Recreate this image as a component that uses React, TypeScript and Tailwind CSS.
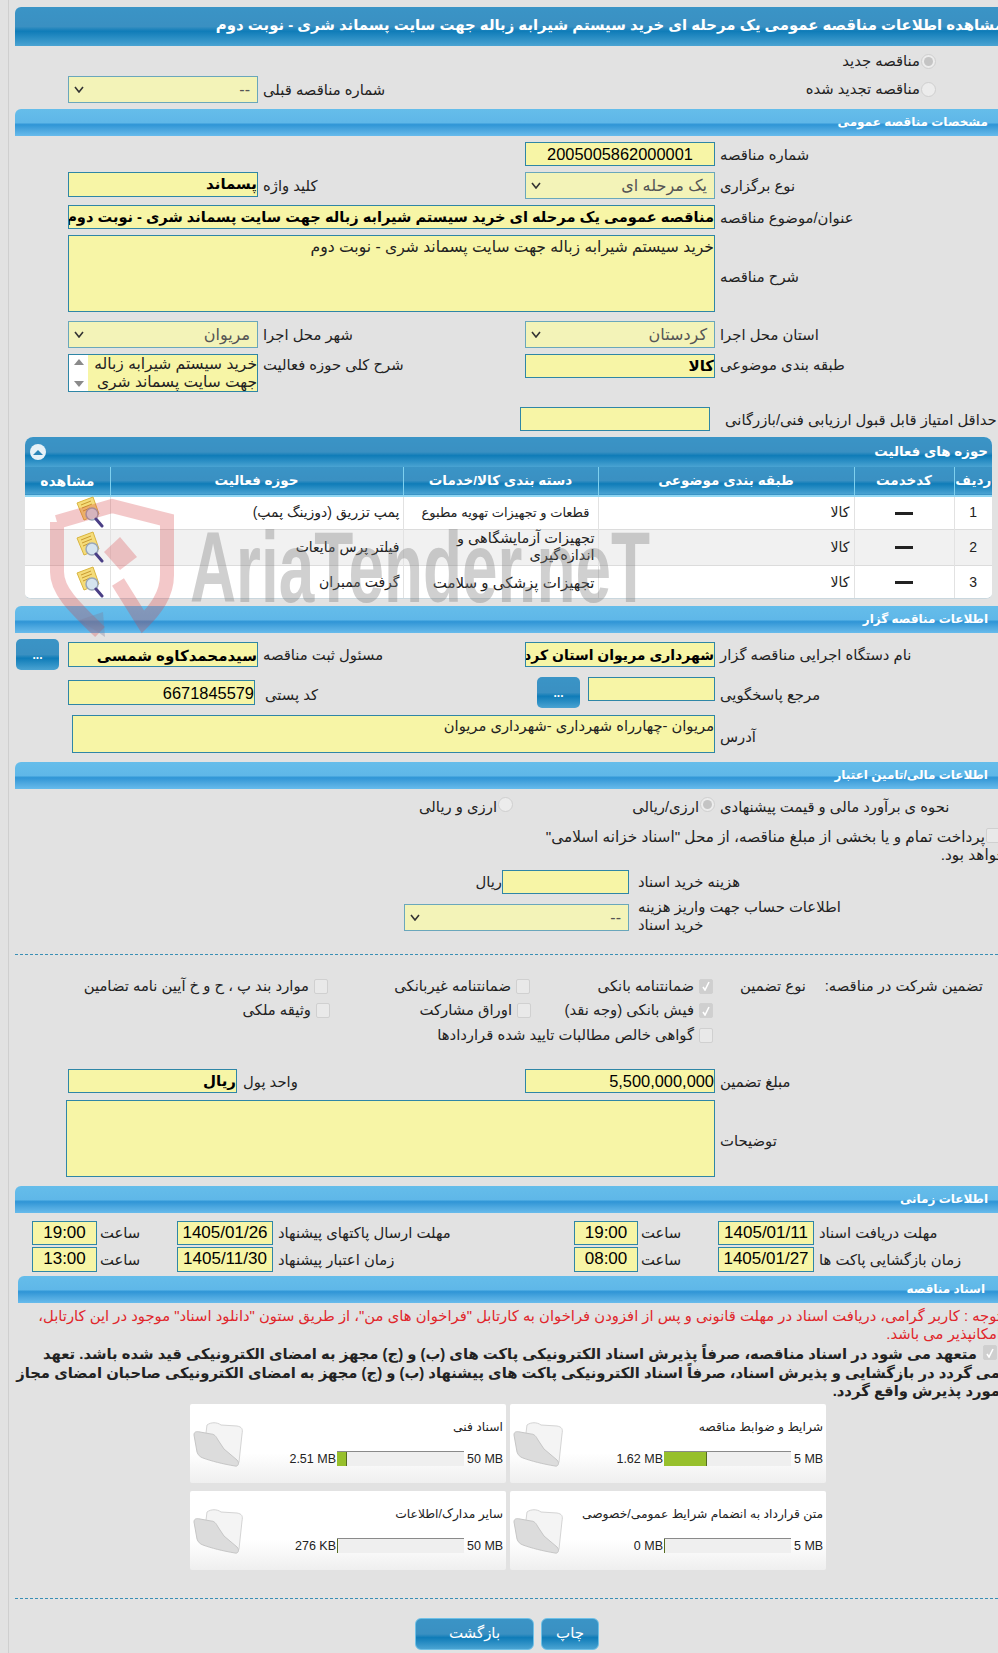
import type { ReactNode } from 'react'

const fieldBase = 'border border-[#2f86a6] bg-[#f7f5a6] overflow-hidden whitespace-nowrap'
const formGrid = 'grid grid-cols-[68px_190px_267px_190px_283px] items-start'
const blueGradient = 'bg-[linear-gradient(#3a94c6_0%,#3a90c2_50%,#0f7cb8_62%,#4aa3d2_100%)]'

function Field({ children, className = '' }: { children?: ReactNode; className?: string }) {
  return <div dir="rtl" className={`${fieldBase} text-right text-[15px] leading-[22px] font-bold text-black ${className}`}>{children}</div>
}

function Digits({ children, center = false, className = '' }: { children?: ReactNode; center?: boolean; className?: string }) {
  return <div className={`${fieldBase} ${center ? 'text-center' : 'text-right'} text-[16.4px] leading-[22px] text-black ${className}`}>{children}</div>
}

function Select({ value, className = '' }: { value: string; className?: string }) {
  return (
    <div dir="ltr" className={`flex items-center justify-between border border-[#6aa7bb] bg-[#f3f3b8] pl-[5px] pr-[7px] ${className}`}>
      <svg width="10" height="7" viewBox="0 0 10 7"><path d="M1 1l4 5 4-5" fill="none" stroke="#333" strokeWidth="1.6" /></svg>
      <span dir="rtl" className="text-[16px] text-[#555]">{value}</span>
    </div>
  )
}

function Label({ children, className = '' }: { children: ReactNode; className?: string }) {
  return <div dir="rtl" className={`pl-[5px] pt-[1px] text-left text-[14.8px] text-[#222] whitespace-nowrap ${className}`}>{children}</div>
}

function SectionBar({ title, className = '' }: { title: string; className?: string }) {
  return (
    <div
      dir="rtl"
      className={`h-[27px] rounded-tl-[6px] bg-[linear-gradient(#65bdea_0%,#5fb7e8_50%,#2f95d6_58%,#4fa9e0_80%,#67bbec_100%)] pr-[10px] text-[12px] leading-[27px] font-bold text-white ${className}`}
    >
      {title}
    </div>
  )
}

function Radio({ on = false }: { on?: boolean }) {
  return (
    <span className="flex h-[15px] w-[15px] shrink-0 items-center justify-center rounded-full border border-[#cfcfcf] bg-[#ececec]">
      {on && <span className="h-[9px] w-[9px] rounded-full bg-[#c4c4c4]" />}
    </span>
  )
}

function Check({ on = false }: { on?: boolean }) {
  return (
    <span className={`flex h-[15px] w-[14px] shrink-0 items-center justify-center rounded-[2px] border border-[#d0d0d0] ${on ? 'bg-[#cfcfcf]' : 'bg-[#e9e9e9]'}`}>
      {on && <svg width="10" height="10" viewBox="0 0 10 10"><path d="M2 6l2 3 4-8" fill="none" stroke="#fff" strokeWidth="1.6" /></svg>}
    </span>
  )
}

function ViewIcon() {
  return (
    <svg width="30" height="32" viewBox="0 0 30 32">
      <path d="M3 7L19 1l6 17-15 6z" fill="#f5dc7a" stroke="#d9b53f" />
      <path d="M7 9l10-4M8 12l10-4M9 15l7-3" stroke="#c99a30" strokeWidth="1" />
      <circle cx="18" cy="18" r="6" fill="#d5e4ef" stroke="#9aa7b8" strokeWidth="1.5" />
      <path d="M22 23l6 7" stroke="#4a3f86" strokeWidth="3" strokeLinecap="round" />
    </svg>
  )
}

function FolderIcon() {
  return (
    <svg width="52" height="48" viewBox="0 0 52 48" className="shrink-0">
      <path d="M14 4c4-3 10-3 14 0l16 1c5 1 6 3 5 8l-3 28c-1 3-3 4-5 2L12 20z" fill="#f4f4f4" stroke="#d4d4d4" />
      <path d="M1 14c0-3 2-4 6-3l11 2c3 0 5 2 7 6l6 9 13 11c3 3 1 7-2 6-12-2-24-5-32-8-3-1-5-3-6-6z" fill="#dcdcdc" stroke="#c6c6c6" />
    </svg>
  )
}

function DocCard({ title, used, max, fill, maxW }: { title: string; used: string; max: string; fill: string; maxW: string }) {
  return (
    <div className="flex h-[79px] flex-col rounded-[2px] bg-[linear-gradient(#ffffff_0%,#ffffff_62%,#efefef_100%)] px-[3px]">
      <div dir="rtl" className="mt-[13px] h-[20px] text-[12.3px] leading-[20px] whitespace-nowrap text-[#222]">{title}</div>
      <div className="-mt-[16px] flex items-start">
        <FolderIcon />
        <div className="flex flex-1 items-start justify-end pt-[30px] [font-family:'Liberation_Sans',sans-serif] text-[12.5px] leading-[16px] whitespace-nowrap text-[#222]">
          <span className="pr-[1px]">{used}</span>
          <span className="h-[15px] w-[127px] border-t border-[#8a8a8a] bg-[#efefef]">
            <span className={`block h-[14px] border-r border-[#556b1f] bg-[#97c02c] ${fill}`} />
          </span>
          <span className={`pl-[3px] ${maxW}`}>{max}</span>
        </div>
      </div>
    </div>
  )
}

const rows = [
  { n: '1', cat: 'قطعات و تجهیزات تهویه مطبوع', catClass: 'pr-[8px] text-[13px] whitespace-nowrap', act: 'پمپ تزریق (دوزینگ پمپ)', h: 'h-[33px]' },
  { n: '2', cat: 'تجهیزات آزمایشگاهی و اندازه‌گیری', catClass: 'pr-[3px] text-[14.5px]', act: 'فیلتر پرس مایعات', h: 'h-[36px]' },
  { n: '3', cat: 'تجهیزات پزشکی و سلامت', catClass: 'pr-[3px] text-[15px] whitespace-nowrap', act: 'گرفت ممبران', h: 'h-[34px]' },
]

function ActivityTable() {
  const headCell = 'border-l border-[#7fd0ee] text-center text-[13.5px] font-bold text-white'
  return (
    <div className="ml-[25px] mr-[6px] mt-[6px] h-[162px] overflow-hidden rounded-t-[8px] rounded-b-[6px] border-b border-[#c9d7de] bg-white">
      <div dir="rtl" className={`flex h-[30px] items-center justify-between ${blueGradient} pl-[5px] pr-[4px] text-[13.4px] font-bold text-white`}>
        <span>حوزه های فعالیت</span>
        <span className="flex h-[16px] w-[16px] items-center justify-center rounded-full bg-[#e6f1f7]">
          <span className="h-0 w-0 border-x-[5px] border-b-[5px] border-x-transparent border-b-[#2d86b8]" />
        </span>
      </div>
      <table dir="rtl" className="w-full table-fixed border-collapse text-[14px] text-[#222]">
        <colgroup>
          <col className="w-[38px]" />
          <col className="w-[100px]" />
          <col className="w-[256px]" />
          <col className="w-[195px]" />
          <col className="w-[293px]" />
          <col />
        </colgroup>
        <thead>
          <tr className={`h-[29px] ${blueGradient} border-b-2 border-[#8fd6f2]`}>
            <th className={headCell}>ردیف</th>
            <th className={headCell}>کدخدمت</th>
            <th className={headCell}>طبقه بندی موضوعی</th>
            <th className={headCell}>دسته بندی کالا/خدمات</th>
            <th className={headCell}>حوزه فعالیت</th>
            <th className="text-center text-[14px] font-bold text-white">مشاهده</th>
          </tr>
        </thead>
        <tbody>
          {rows.map((r, i) => (
            <tr key={r.n} className={`${r.h} border-b border-[#dcdcdc] ${i === 1 ? 'bg-[#f1f1f1]' : 'bg-white'}`}>
              <td className="border-l border-[#e2e2e2] text-center [font-family:'Liberation_Sans',sans-serif] text-[14px]">{r.n}</td>
              <td className="border-l border-[#e2e2e2] text-center"><span className="inline-block h-[3px] w-[18px] bg-[#222] align-middle" /></td>
              <td className="border-l border-[#e2e2e2] pr-[4px]">کالا</td>
              <td className={`border-l border-[#e2e2e2] leading-[17px] ${r.catClass}`}>{r.cat}</td>
              <td className="border-l border-[#e2e2e2] pr-[3px]">{r.act}</td>
              <td className="p-0"><div className="-mt-[3px] h-[30px] overflow-visible pr-[6px]"><ViewIcon /></div></td>
            </tr>
          ))}
        </tbody>
      </table>
    </div>
  )
}

function Watermark() {
  return (
    <svg className="pointer-events-none absolute left-0 top-[490px]" width="700" height="160" viewBox="0 490 700 160">
      <g fill="none" stroke="#d63c40" strokeWidth="14" opacity="0.28">
        <path d="M57 522L112 506L167 520V575C167 595 155 610 143 622L118 582" />
        <path d="M57 522V572C57 590 72 605 100 632" />
      </g>
      <path d="M120 537L137 557L120 570L104 552z" fill="#d63c40" opacity="0.28" />
      <path d="M80 620L105 637L103 612z" fill="#7f7f9a" opacity="0.35" />
      <text x="190" y="602" fontFamily="'Liberation Sans'" fontWeight="700" fontSize="100" textLength="460" lengthAdjust="spacingAndGlyphs" fill="#7a7a7a" opacity="0.35">AriaTender.neT</text>
    </svg>
  )
}

function GuaranteeOption({ label, on }: { label: string; on?: boolean }) {
  return (
    <div className="flex items-center justify-end gap-[5px]">
      <span dir="rtl" className="text-[14.8px] whitespace-nowrap text-[#222]">{label}</span>
      <Check on={on} />
    </div>
  )
}

function TimeCells({ t1, d1, l1, t2, d2, l2 }: { t1: string; d1: string; l1: string; t2: string; d2: string; l2: string }) {
  const small = 'pl-[3px] pt-[1px] text-[14.8px] text-[#222] text-left'
  return (
    <>
      <div />
      <Digits center className="h-full !text-[17px]">{t1}</Digits>
      <div dir="rtl" className={small}>ساعت</div>
      <Digits center className="h-full !text-[17px]">{d1}</Digits>
      <Label className="pl-[2px]">{l1}</Label>
      <Digits center className="h-full !text-[17px]">{t2}</Digits>
      <div dir="rtl" className={small}>ساعت</div>
      <Digits center className="h-full !text-[17px]">{d2}</Digits>
      <Label className="pl-[3px]">{l2}</Label>
    </>
  )
}

export default function App() {
  return (
    <div dir="ltr" className="relative h-[1653px] w-[998px] overflow-hidden bg-[#e2e2e2] [font-family:'Liberation_Sans','DejaVu_Sans',sans-serif]">
      <div className="pointer-events-none absolute inset-y-0 left-[8px] w-px bg-[#cfcfcf]" />

      <div className="pt-[7px]">
        <div dir="rtl" className={`ml-[15px] h-[39px] overflow-hidden rounded-tl-[6px] ${blueGradient} text-[14.9px] leading-[37px] font-bold whitespace-nowrap text-white`}>
          <div className="-mr-[6px]">مشاهده اطلاعات مناقصه عمومی یک مرحله ای خرید سیستم شیرابه زباله جهت سایت پسماند شری - نوبت دوم</div>
        </div>

        <div className={`${formGrid} h-[63px]`}>
          <div />
          <Select value="--" className="mt-[30px] h-[27px]" />
          <Label className="mt-[32px]">شماره مناقصه قبلی</Label>
          <div />
          <div dir="rtl" className="flex flex-col gap-[9px] pr-[62px] pt-[6px] text-[14.8px] leading-[19px] whitespace-nowrap text-[#222]">
            <div className="flex items-center gap-[1px]"><Radio on /><span>مناقصه جدید</span></div>
            <div className="flex items-center gap-[1px]"><Radio /><span>مناقصه تجدید شده</span></div>
          </div>
        </div>

        <SectionBar title="مشخصات مناقصه عمومی" className="ml-[15px]" />

        <div className={`${formGrid} mt-[6px] h-[24px]`}>
          <div />
          <div />
          <div />
          <Digits center className="h-[24px]">2005005862000001</Digits>
          <Label className="leading-[24px]">شماره مناقصه</Label>
        </div>
        <div className={`${formGrid} mt-[6px] h-[27px]`}>
          <div />
          <Field className="h-[25px]">پسماند</Field>
          <Label className="leading-[27px]">کلید واژه</Label>
          <Select value="یک مرحله ای" className="h-[27px]" />
          <Label className="leading-[27px]">نوع برگزاری</Label>
        </div>
        <div className="mt-[6px] grid h-[24px] grid-cols-[68px_647px_283px] items-start">
          <div />
          <Field className="h-[24px] !text-[14.6px]">مناقصه عمومی یک مرحله ای خرید سیستم شیرابه زباله جهت سایت پسماند شری - نوبت دوم</Field>
          <Label className="leading-[24px]">عنوان/موضوع مناقصه</Label>
        </div>
        <div className="mt-[6px] grid h-[77px] grid-cols-[68px_647px_283px] items-center">
          <div />
          <div dir="rtl" className={`${fieldBase} h-[77px] text-right text-[15.6px] leading-[22px] text-[#222]`}>خرید سیستم شیرابه زباله جهت سایت پسماند شری - نوبت دوم</div>
          <Label className="mt-[6px]">شرح مناقصه</Label>
        </div>
        <div className={`${formGrid} mt-[9px] h-[27px]`}>
          <div />
          <Select value="مریوان" className="h-[27px]" />
          <Label className="leading-[27px]">شهر محل اجرا</Label>
          <Select value="کردستان" className="h-[27px]" />
          <Label className="leading-[27px]">استان محل اجرا</Label>
        </div>
        <div className={`${formGrid} mt-[6px] h-[38px]`}>
          <div />
          <div className="flex h-[38px] border border-[#2f86a6] bg-[#f7f5a6]">
            <div className="flex w-[19px] flex-col items-center justify-between bg-white py-[4px]">
              <span className="h-0 w-0 border-x-[5px] border-b-[6px] border-x-transparent border-b-[#8a8a8a]" />
              <span className="h-0 w-0 border-x-[5px] border-t-[6px] border-x-transparent border-t-[#8a8a8a]" />
            </div>
            <div dir="rtl" className="flex-1 overflow-hidden text-[15.5px] leading-[18px] whitespace-nowrap text-[#222]">
              <div>خرید سیستم شیرابه زباله</div>
              <div>جهت سایت پسماند شری</div>
            </div>
          </div>
          <Label className="leading-[20px]">شرح کلی حوزه فعالیت</Label>
          <Field className="h-[24px]">کالا</Field>
          <Label className="leading-[20px]">طبقه بندی موضوعی</Label>
        </div>
        <div className="mt-[15px] grid h-[24px] grid-cols-[520px_190px_10px_1fr] items-start">
          <div />
          <Digits className="h-[24px]" />
          <div />
          <Label className="pl-0 leading-[24px]">حداقل امتیاز قابل قبول ارزیابی فنی/بازرگانی</Label>
        </div>

        <ActivityTable />

        <SectionBar title="اطلاعات مناقصه گزار" className="ml-[15px] mt-[7px]" />

        <div className={`${formGrid} mt-[6px] h-[31px]`}>
          <button className={`ml-[16px] h-[31px] w-[43px] rounded-[5px] ${blueGradient} text-[12px] font-bold text-white`}>...</button>
          <Field className="mt-[3px] h-[25px] leading-[25px]">سیدمحمدکاوه شمسی</Field>
          <Label className="mt-[3px] leading-[25px]">مسئول ثبت مناقصه</Label>
          <Field className="mt-[3px] h-[25px] !text-[14px] leading-[25px]">شهرداری مریوان استان کرد</Field>
          <Label className="mt-[3px] leading-[25px]">نام دستگاه اجرایی مناقصه گزار</Label>
        </div>
        <div className={`${formGrid} mt-[7px] h-[31px]`}>
          <div />
          <Digits className="mt-[3px] h-[25px] w-[187px] leading-[25px]">6671845579</Digits>
          <Label className="mt-[5px] pl-[7px] leading-[25px]">کد پستی</Label>
          <div className="flex items-start gap-[8px] pl-[12px]">
            <button className={`h-[31px] w-[43px] shrink-0 rounded-[5px] ${blueGradient} text-[12px] font-bold text-white`}>...</button>
            <Digits className="h-[24px] flex-1" />
          </div>
          <Label className="mt-[5px] leading-[25px]">مرجع پاسخگویی</Label>
        </div>
        <div className="mt-[7px] grid h-[38px] grid-cols-[72px_643px_283px] items-center">
          <div />
          <div dir="rtl" className={`${fieldBase} h-[38px] text-right text-[14.7px] leading-[20px] text-[#222]`}>مریوان -چهارراه شهرداری -شهرداری مریوان</div>
          <Label className="mt-[6px]">آدرس</Label>
        </div>

        <SectionBar title="اطلاعات مالی/تامین اعتبار" className="ml-[15px] mt-[9px]" />

        <div className="mt-[6px] grid h-[20px] grid-cols-[513px_202px_283px] items-center">
          <div dir="rtl" className="flex items-center gap-[1px] text-[14.8px] whitespace-nowrap text-[#222]"><span className="-mt-[4px]"><Radio /></span><span>ارزی و ریالی</span></div>
          <div dir="rtl" className="flex items-center gap-[1px] text-[14.8px] whitespace-nowrap text-[#222]"><span className="-mt-[4px]"><Radio on /></span><span>ارزی/ریالی</span></div>
          <Label>نحوه ی برآورد مالی و قیمت پیشنهادی</Label>
        </div>
        <div dir="rtl" className="mr-[-8px] mt-[13px] h-[36px] text-[15.3px] leading-[18px] whitespace-nowrap text-[#222]">
          <div className="flex items-start gap-[1px] pr-[6px]"><Check /><span>پرداخت تمام و یا بخشی از مبلغ مناقصه، از محل "اسناد خزانه اسلامی"</span></div>
          <div>خواهد بود.</div>
        </div>
        <div className="mt-[6px] grid h-[24px] grid-cols-[502px_127px_1fr] items-center">
          <div dir="rtl" className="text-right text-[14.8px] text-[#222]">ریال</div>
          <Digits className="h-[24px]" />
          <Label className="pl-[9px]">هزینه خرید اسناد</Label>
        </div>
        <div className="mt-[7px] grid h-[27px] grid-cols-[404px_225px_1fr] items-center">
          <div />
          <Select value="--" className="h-[27px]" />
          <div dir="rtl" className="ml-[9px] -mt-[3px] w-[208px] text-left text-[14.8px] leading-[18px] text-[#222]">اطلاعات حساب جهت واریز هزینه خرید اسناد</div>
        </div>

        <div className="ml-[15px] mt-[26px] border-t border-dashed border-[#3a8fb5]" />

        <div className="mt-[19px] grid h-[24px] grid-cols-[328px_202px_183px_285px] items-center">
          <GuaranteeOption label="موارد بند پ ، ح و خ آیین نامه تضامین" />
          <GuaranteeOption label="ضمانتنامه غیربانکی" />
          <GuaranteeOption label="ضمانتنامه بانکی" on />
          <div dir="rtl" className="flex justify-between pr-[15px] pl-[27px] text-[14.8px] whitespace-nowrap text-[#222]"><span>تضمین شرکت در مناقصه:</span><span>نوع تضمین</span></div>
        </div>
        <div className="grid h-[25px] grid-cols-[330px_201px_182px_285px] items-center">
          <GuaranteeOption label="وثیقه ملکی" />
          <GuaranteeOption label="اوراق مشارکت" />
          <GuaranteeOption label="فیش بانکی (وجه نقد)" on />
          <div />
        </div>
        <div className="grid h-[25px] grid-cols-[713px_285px] items-center">
          <GuaranteeOption label="گواهی خالص مطالبات تایید شده قراردادها" />
          <div />
        </div>

        <div className="mt-[21px] grid h-[24px] grid-cols-[68px_169px_288px_190px_283px] items-start">
          <div />
          <Field className="h-[24px]">ریال</Field>
          <Label className="pl-[6px] leading-[24px]">واحد پول</Label>
          <Digits className="h-[24px]">5,500,000,000</Digits>
          <Label className="leading-[24px]">مبلغ تضمین</Label>
        </div>
        <div className="mt-[7px] grid h-[77px] grid-cols-[66px_649px_283px] items-center">
          <div />
          <Digits className="h-[77px]" />
          <Label className="mt-[4px]">توضیحات</Label>
        </div>

        <SectionBar title="اطلاعات زمانی" className="ml-[15px] mt-[9px]" />

        <div className="mt-[8px] grid h-[24px] grid-cols-[32px_65px_80px_96px_301px_64px_80px_96px_1fr] items-center">
          <TimeCells t1="19:00" d1="1405/01/26" l1="مهلت ارسال پاکتهای پیشنهاد" t2="19:00" d2="1405/01/11" l2="مهلت دریافت اسناد" />
        </div>
        <div className="mt-[2px] grid h-[25px] grid-cols-[32px_65px_80px_96px_301px_64px_80px_96px_1fr] items-center">
          <TimeCells t1="13:00" d1="1405/11/30" l1="زمان اعتبار پیشنهاد" t2="08:00" d2="1405/01/27" l2="زمان بازگشایی پاکت ها" />
        </div>

        <SectionBar title="اسناد مناقصه" className="ml-[18px] mt-[4px] !pr-[13px]" />

        <div dir="rtl" className="mr-[-3px] mt-[4px] text-[14.8px] leading-[18px] whitespace-nowrap text-[#e0262b]">
          <div>توجه : کاربر گرامی، دریافت اسناد در مهلت قانونی و پس از افزودن فراخوان به کارتابل "فراخوان های من"، از طریق ستون "دانلود اسناد" موجود در این کارتابل،</div>
          <div>امکانپذیر می باشد.</div>
        </div>
        <div dir="rtl" className="mr-[-2px] mt-[2px] text-[14.8px] leading-[18.5px] font-bold whitespace-nowrap text-[#222]">
          <div className="flex items-start gap-[6px] pr-[3px]"><Check on /><span>متعهد می شود در اسناد مناقصه، صرفاً پذیرش اسناد الکترونیکی پاکت های (ب) و (ج) مجهز به امضای الکترونیکی قید شده باشد. تعهد</span></div>
          <div>می گردد در بازگشایی و پذیرش اسناد، صرفاً اسناد الکترونیکی پاکت های پیشنهاد (ب) و (ج) مجهز به امضای الکترونیکی صاحبان امضای مجاز</div>
          <div>مورد پذیرش واقع گردد.</div>
        </div>

        <div className="ml-[190px] mt-[3px] grid w-[636px] grid-cols-[316px_316px] gap-x-[4px] gap-y-[8px]">
          <DocCard title="اسناد فنی" used="2.51 MB" max="50 MB" fill="w-[10px]" maxW="w-[39px]" />
          <DocCard title="شرایط و ضوابط مناقصه" used="1.62 MB" max="5 MB" fill="w-[43px]" maxW="w-[32px]" />
          <DocCard title="سایر مدارک/اطلاعات" used="276 KB" max="50 MB" fill="w-[1px]" maxW="w-[39px]" />
          <DocCard title="متن قرارداد به انضمام شرایط عمومی/خصوصی" used="0 MB" max="5 MB" fill="w-[1px]" maxW="w-[32px]" />
        </div>

        <div className="ml-[15px] mt-[28px] border-t border-dashed border-[#3a8fb5]" />

        <div className="ml-[415px] mt-[19px] flex gap-[7px]">
          <button className={`h-[32px] w-[119px] rounded-[6px] border border-[#6fc0e6] ${blueGradient} text-[15px] text-white`}>بازگشت</button>
          <button className={`h-[32px] w-[58px] rounded-[6px] border border-[#6fc0e6] ${blueGradient} text-[15px] text-white`}>چاپ</button>
        </div>
      </div>

      <Watermark />
    </div>
  )
}
